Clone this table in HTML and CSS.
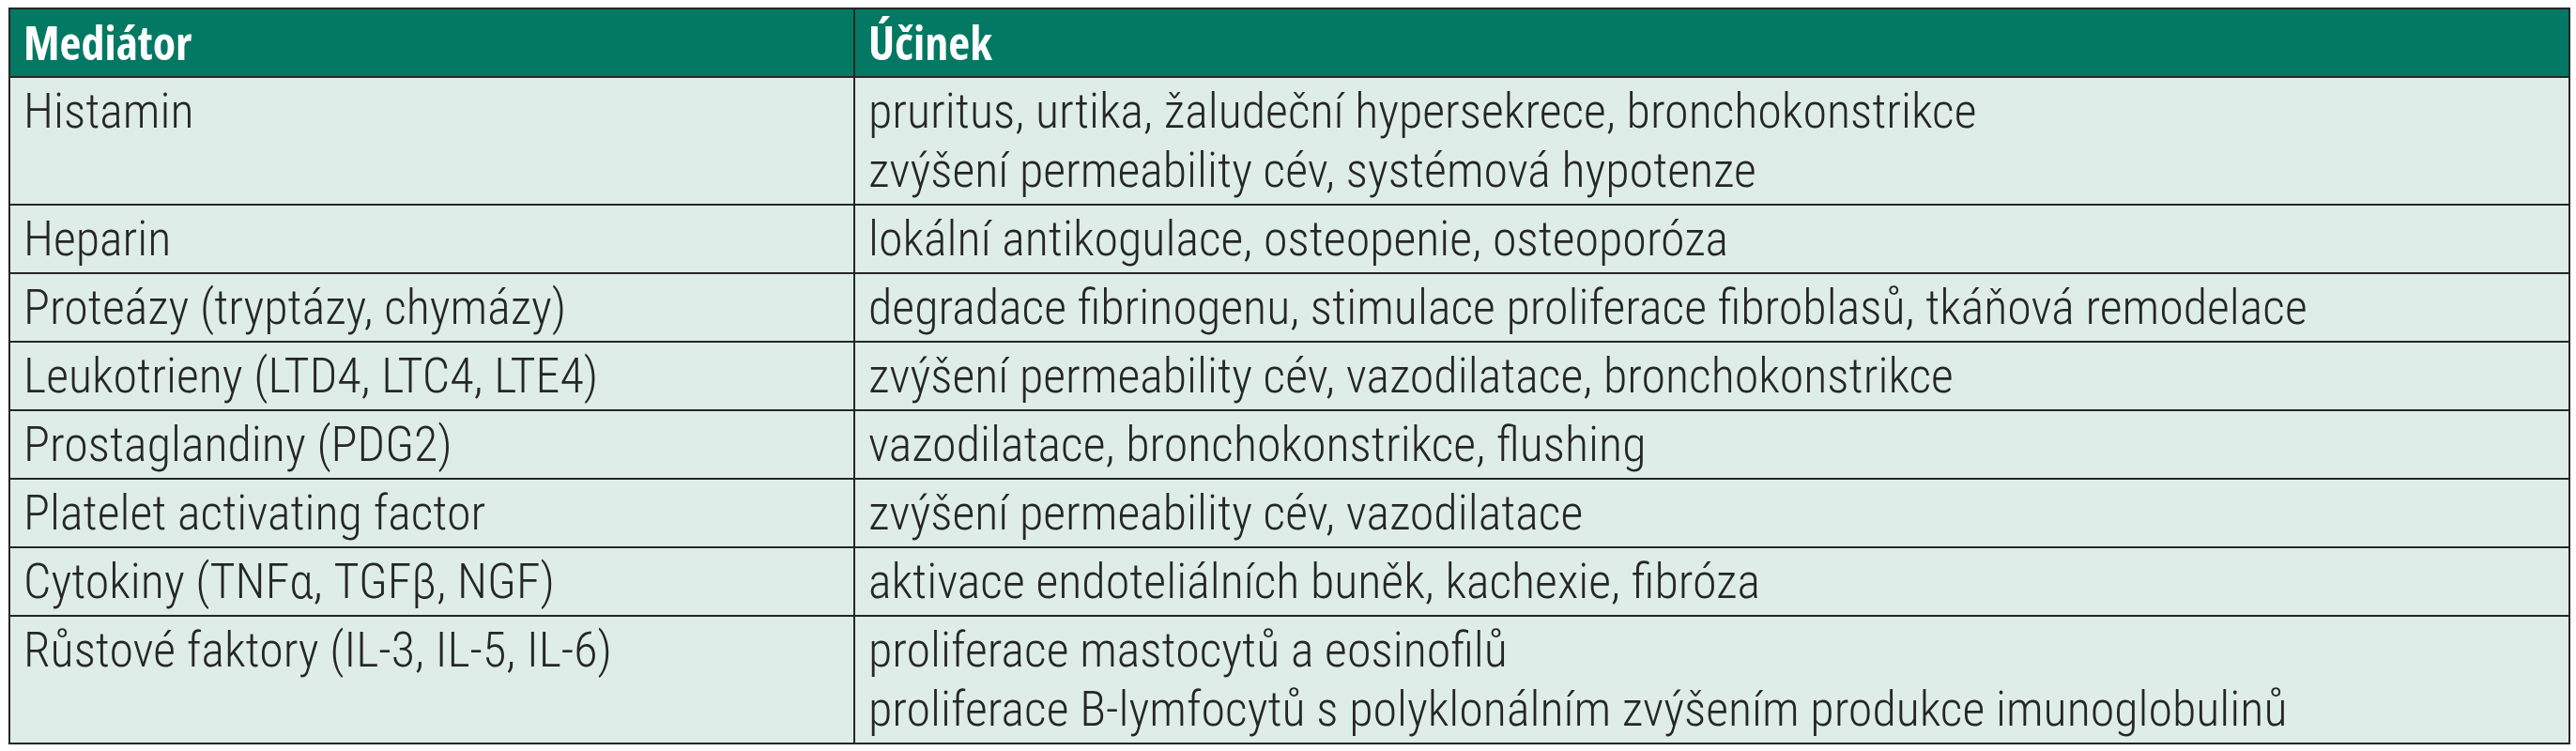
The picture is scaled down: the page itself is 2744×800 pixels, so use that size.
FILE: index.html
```html
<!DOCTYPE html>
<html lang="cs">
<head>
<meta charset="utf-8">
<title>Mediátory</title>
<link rel="stylesheet" href="styles.css">
</head>
<body>
<div class="wrap">
<table class="med">
  <thead>
    <tr><th class="c1">Mediátor</th><th class="c2">Účinek</th></tr>
  </thead>
  <tbody>
    <tr><td>Histamin</td><td>pruritus, urtika, žaludeční hypersekrece, bronchokonstrikce<br>zvýšení permeability cév, systémová hypotenze</td></tr>
    <tr><td>Heparin</td><td>lokální antikogulace, osteopenie, osteoporóza</td></tr>
    <tr><td>Proteázy (tryptázy, chymázy)</td><td>degradace fibrinogenu, stimulace proliferace fibroblasů, tkáňová remodelace</td></tr>
    <tr><td>Leukotrieny (LTD4, LTC4, LTE4)</td><td>zvýšení permeability cév, vazodilatace, bronchokonstrikce</td></tr>
    <tr><td>Prostaglandiny (PDG2)</td><td>vazodilatace, bronchokonstrikce, flushing</td></tr>
    <tr><td>Platelet activating factor</td><td>zvýšení permeability cév, vazodilatace</td></tr>
    <tr><td>Cytokiny (TNFα, TGFβ, NGF)</td><td>aktivace endoteliálních buněk, kachexie, fibróza</td></tr>
    <tr><td>Růstové faktory (IL-3, IL-5, IL-6)</td><td>proliferace mastocytů a eosinofilů<br>proliferace B-lymfocytů s polyklonálním zvýšením produkce imunoglobulinů</td></tr>
  </tbody>
</table>
</div>
</body>
</html>
```
FILE: styles.css
```css
html, body {
  margin: 0;
  padding: 0;
  background: #ffffff;
}

.wrap {
  padding: 8px 6px 0 9px;
}

.med {
  width: 100%;
  border-collapse: collapse;
  table-layout: fixed;
  font-family: "Roboto Condensed", "Roboto", "Liberation Sans", sans-serif;
  font-weight: 300;
  font-size: 52px;
  color: #262626;
  border: 2px solid #262626;
}

.med th,
.med td {
  border: 2px solid #262626;
  padding: 4px 14px 4px 14px;
  line-height: 63px;
  text-align: left;
  vertical-align: top;
  white-space: nowrap;
}

.med th {
  background: #037863;
  color: #ffffff;
  font-family: "Open Sans", "Liberation Sans", sans-serif;
  font-stretch: condensed;
  font-weight: 700;
  font-size: 50px;
}

.med .c1 {
  width: 870px;
}

.med td {
  background: #deede8;
}
```
